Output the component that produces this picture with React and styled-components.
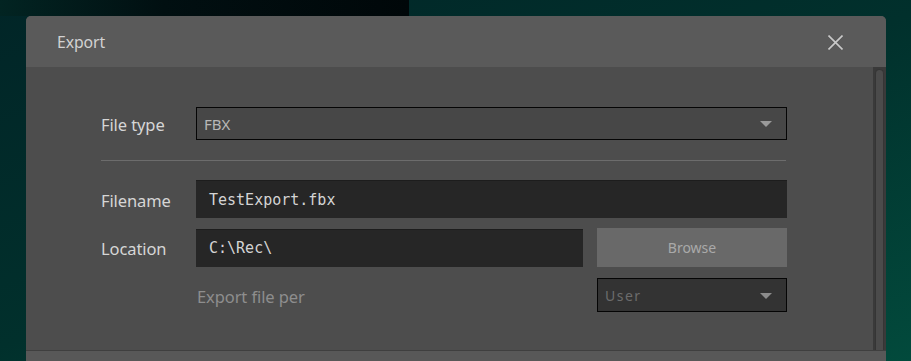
import React from "react";
import styled, { createGlobalStyle } from "styled-components";

const Global = createGlobalStyle`
  html, body { margin: 0; padding: 0; }
  body {
    width: 911px;
    height: 361px;
    overflow: hidden;
    font-family: "Noto Sans", "Open Sans", sans-serif;
    background:
      linear-gradient(90deg, #022422 0%, #010f11 40%, #000709 100%) 0 0 / 409px 16px no-repeat,
      linear-gradient(160deg, #012527 0%, #01302c 50%, #024a3c 100%);
  }
`;

const Page = styled.div`
  padding: 16px 0 0 26px;
`;

const Dialog = styled.div`
  width: 860px;
  height: 345px;
  border-radius: 5px 5px 0 0;
  overflow: hidden;
  display: flex;
  flex-direction: column;
  background: #4d4d4d;
`;

const Header = styled.div`
  height: 51px;
  flex: none;
  background: #5a5a5a;
  display: flex;
  align-items: center;
  justify-content: space-between;
  padding: 0 43px 0 31px;
`;

const Title = styled.div`
  font-size: 15.8px;
  color: #d2d2d2;
  letter-spacing: -0.1px;
  margin-top: 1px;
`;

const CloseButton = styled.button`
  width: 15px;
  height: 15px;
  padding: 0;
  border: 0;
  background: none;
  display: flex;
  margin-top: 1px;
`;

const Body = styled.div`
  height: 283px;
  flex: none;
  display: flex;
`;

const Content = styled.div`
  flex: 1;
  padding: 40px 86px 0 75px;
`;

const Track = styled.div`
  width: 13px;
  flex: none;
  background: #3a3a3a;
  display: flex;
  justify-content: center;
  padding-top: 2px;
  box-sizing: border-box;
`;

const Thumb = styled.div`
  width: 9px;
  height: 100%;
  box-sizing: border-box;
  border-radius: 5px 5px 0 0;
  background: #4b4b4b;
  border: 1px solid #353535;
  border-bottom: 0;
`;

const Footer = styled.div`
  flex: 1;
  background: #585858;
  border-top: 1px solid #3f3f3f;
`;

const Form = styled.div`
  display: grid;
  grid-template-columns: 95px 591px;
  align-items: center;
`;

const Label = styled.div`
  font-size: 16.5px;
  color: ${(p) => (p.$dim ? "#8e8e8e" : "#d6d6d6")};
  letter-spacing: -0.1px;
  padding-left: ${(p) => (p.$inset ? "1px" : "0")};
  margin-top: 2px;
`;

const Separator = styled.div`
  grid-column: 1 / -1;
  height: 1px;
  background: #6c6c6c;
  margin: 20px 1px 19px 0;
`;

const SelectBox = styled.div`
  height: ${(p) => p.$h}px;
  box-sizing: border-box;
  border: 1px solid #050505;
  background: ${(p) => p.$bg};
  display: flex;
  align-items: center;
  justify-content: space-between;
  padding: 0 14px 0 7px;
  font-size: ${(p) => p.$size}px;
  color: ${(p) => p.$color};
  letter-spacing: ${(p) => p.$spacing || "0"};
`;

const Arrow = styled.span`
  width: 0;
  height: 0;
  border-left: 6px solid transparent;
  border-right: 6px solid transparent;
  border-top: 6px solid ${(p) => p.$color};
  margin-top: 1px;
`;

const TextField = styled.div`
  height: 38px;
  box-sizing: border-box;
  background: #262626;
  border-top: 1px solid #1d1d1d;
  display: flex;
  align-items: center;
  padding: 0 13px;
  font-family: "DejaVu Sans Mono", "Liberation Mono", monospace;
  font-size: 15px;
  color: #d4d4d4;
`;

const FieldPair = styled.div`
  display: grid;
  grid-template-columns: 1fr 190px;
  column-gap: 14px;
  align-items: center;
`;

const Button = styled.button`
  height: 39px;
  border: 0;
  background: #696969;
  color: #a9a9a9;
  font-family: "Noto Sans", "Open Sans", sans-serif;
  font-size: 14px;
  padding: 0;
`;

const RowGap = styled.div`
  grid-column: 1 / -1;
  height: ${(p) => p.$h}px;
`;

const Select = ({ value, h, bg, color, arrow, spacing, size }) => (
  <SelectBox $h={h} $bg={bg} $color={color} $spacing={spacing} $size={size}>
    <span>{value}</span>
    <Arrow $color={arrow} />
  </SelectBox>
);

export default function App() {
  return (
    <>
      <Global />
      <Page>
        <Dialog>
          <Header>
            <Title>Export</Title>
            <CloseButton aria-label="Close">
              <svg width="15" height="15" viewBox="0 0 15 15">
                <path d="M0.5 0.5 L14.5 14.5 M14.5 0.5 L0.5 14.5" stroke="#c9c9c9" strokeWidth="1.6" />
              </svg>
            </CloseButton>
          </Header>
          <Body>
            <Content>
              <Form>
                <Label>File type</Label>
                <Select value="FBX" h={33} bg="#474747" color="#b8b8b8" arrow="#9a9a9a" size={15} />
                <Separator />
                <Label>Filename</Label>
                <TextField>TestExport.fbx</TextField>
                <RowGap $h={10} />
                <Label>Location</Label>
                <FieldPair>
                  <TextField>C:\Rec\</TextField>
                  <Button>Browse</Button>
                </FieldPair>
                <RowGap $h={11} />
                <div />
                <FieldPair>
                  <Label $dim $inset>Export file per</Label>
                  <Select value="User" h={34} bg="#333333" color="#6c6c6c" arrow="#8c8c8c" spacing="1.5px" size={14} />
                </FieldPair>
              </Form>
            </Content>
            <Track>
              <Thumb />
            </Track>
          </Body>
          <Footer />
        </Dialog>
      </Page>
    </>
  );
}
